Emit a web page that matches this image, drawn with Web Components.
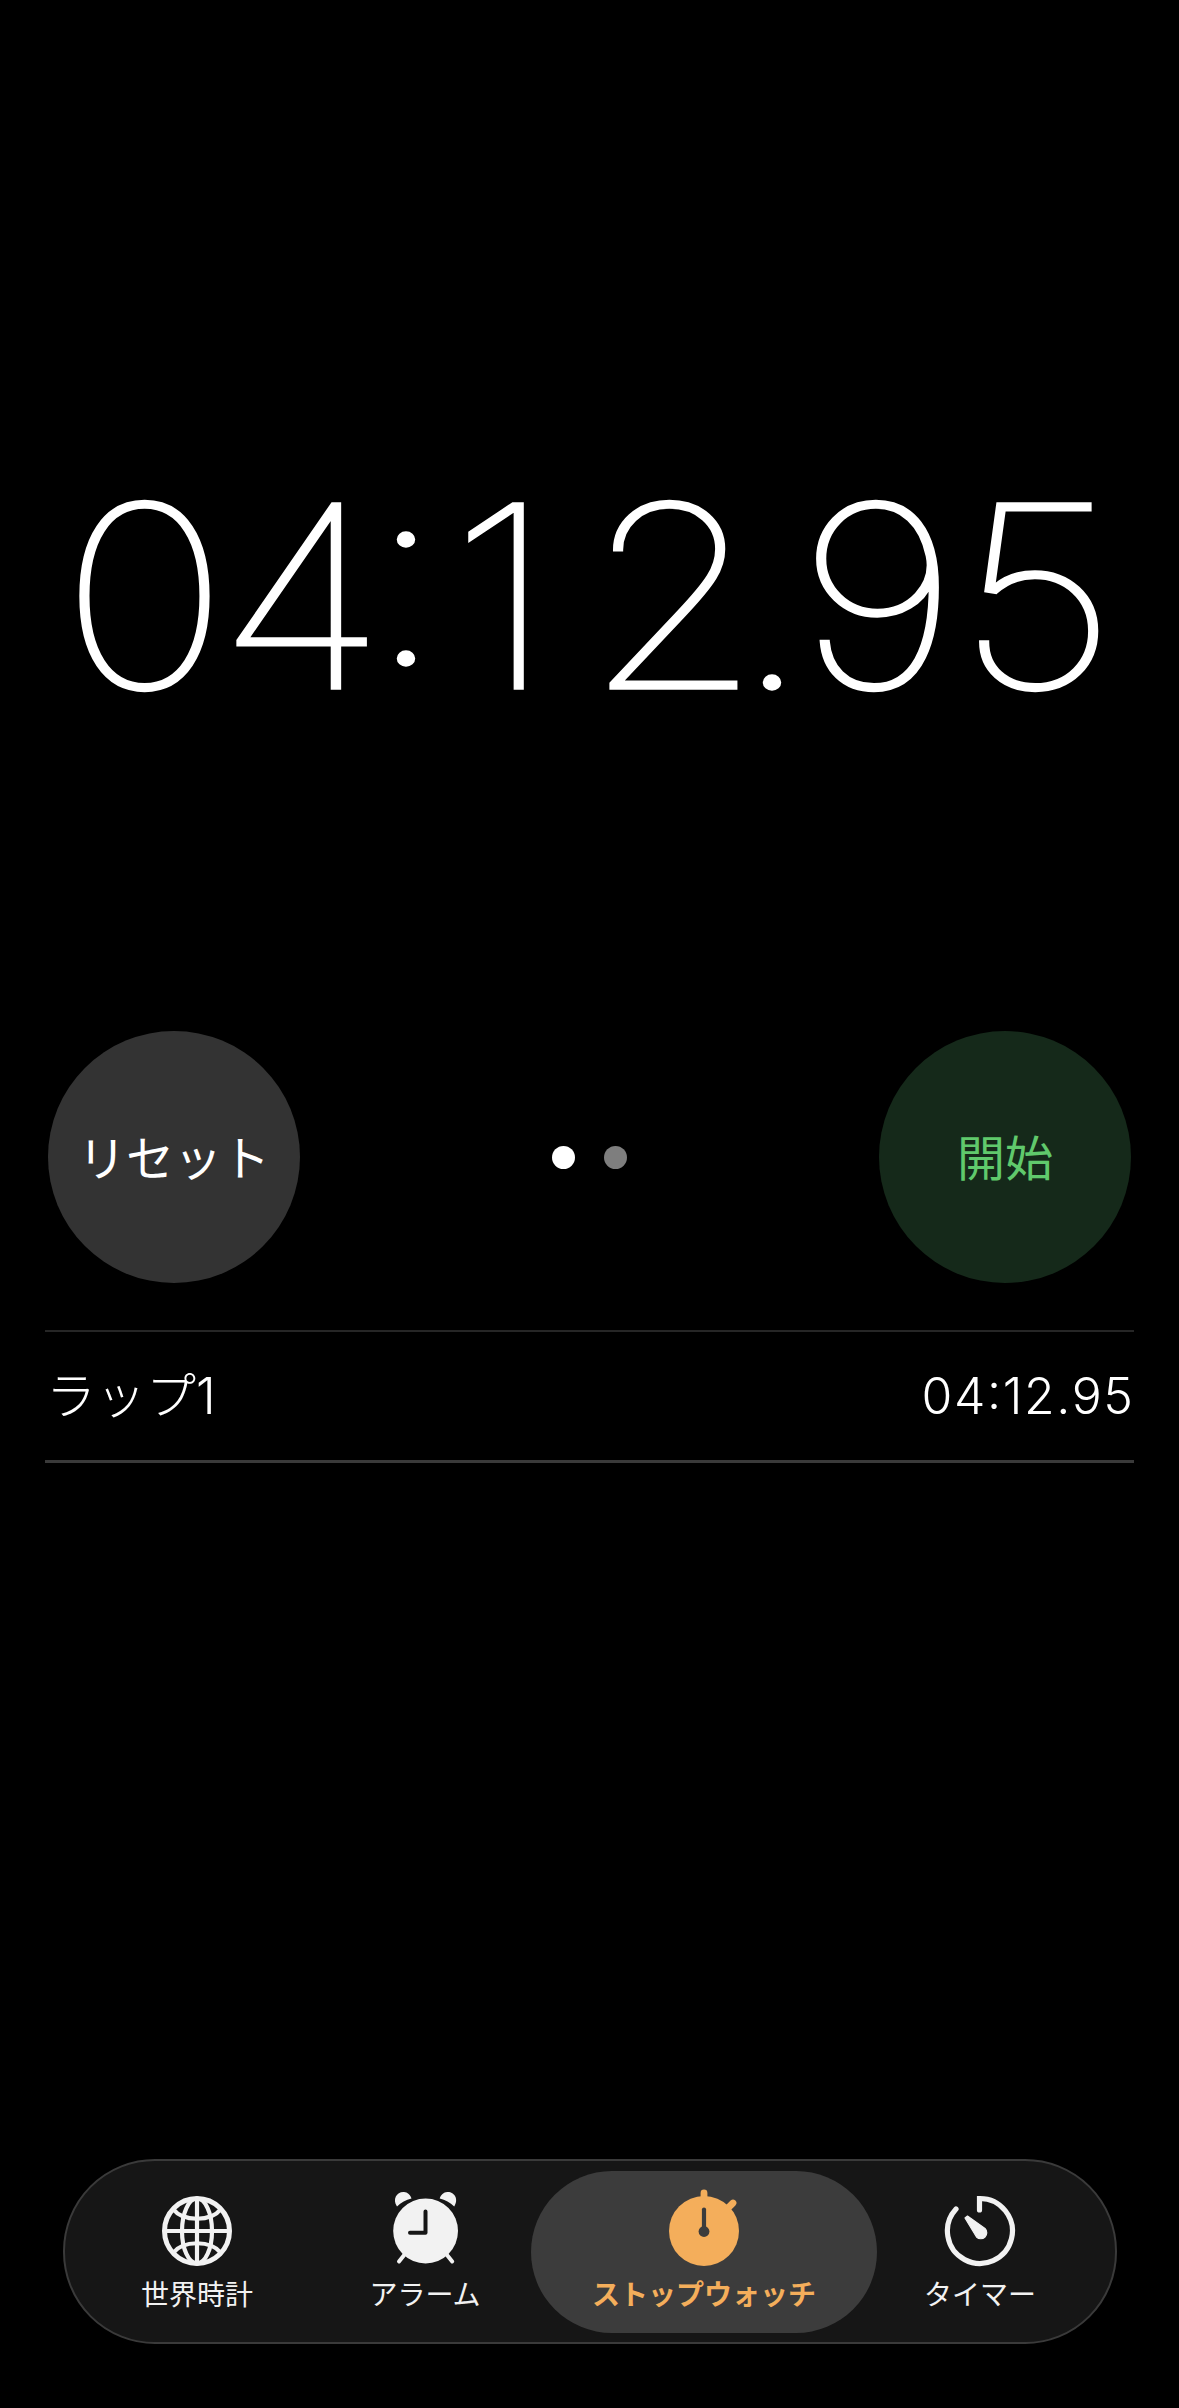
<!DOCTYPE html>
<html lang="ja">
<head>
<meta charset="utf-8">
<title>ストップウォッチ</title>
<style>
  html, body { margin: 0; background: #000; }
  body { font-family: Inter, "Noto Sans CJK JP", sans-serif; color: #fff; }
</style>
</head>
<body>
<stopwatch-app>
  <time-display value="04:12.95"></time-display>
  <control-row>
    <round-button slot="left" variant="reset">リセット</round-button>
    <page-dots slot="center"></page-dots>
    <round-button slot="right" variant="start">開始</round-button>
  </control-row>
  <lap-list>
    <lap-row><span slot="name">ラップ1</span><span slot="time">04:12.95</span></lap-row>
  </lap-list>
  <tab-bar>
    <tab-item label="世界時計">
      <svg viewBox="0 0 90 90" fill="none" stroke="#f2f2f2" stroke-width="4.2">
        <circle cx="45" cy="45" r="32.500" stroke-width="5"/>
        <ellipse cx="45" cy="45" rx="15" ry="32.500"/>
        <path d="M45 12V78M12.500 45H77.500"/>
        <path d="M21 23C31 36 59 36 69 23M21 67C31 54 59 54 69 67"/>
      </svg>
    </tab-item>
    <tab-item label="アラーム">
      <svg viewBox="0 0 90 90">
        <circle cx="45.600" cy="45" r="32.400" fill="#f2f2f2"/>
        <path d="M17 20.500C12 13 17 5.500 24 6C27.500 6.200 30.500 9 31.500 12.500C26 14 21 16.500 17 20.500Z" fill="#f2f2f2"/>
        <path d="M74.200 20.500C79.200 13 74.200 5.500 67.200 6C63.700 6.200 60.700 9 59.700 12.500C65.200 14 70.200 16.500 74.200 20.500Z" fill="#f2f2f2"/>
        <path d="M25 68L19 75.500M66.200 68L72.200 75.500" stroke="#f2f2f2" stroke-width="4" stroke-linecap="round"/>
        <path d="M45.500 25.500V46.700H30" fill="none" stroke="#161616" stroke-width="4" stroke-linecap="round" stroke-linejoin="round"/>
      </svg>
    </tab-item>
    <tab-item label="ストップウォッチ" active>
      <svg viewBox="0 0 90 90">
        <circle cx="45" cy="45" r="35" fill="#f4ae5b"/>
        <path d="M45 7V15M68 23L74 17" stroke="#f4ae5b" stroke-width="6.800" stroke-linecap="round"/>
        <path d="M45 23.500V43" stroke="#3c3c3c" stroke-width="4.200" stroke-linecap="round"/>
        <circle cx="45" cy="45.500" r="5.400" fill="#3c3c3c"/>
      </svg>
    </tab-item>
    <tab-item label="タイマー">
      <svg viewBox="0 0 90 90" fill="none">
        <path d="M44.500 24V12.500A32.500 32.500 0 1 1 21 23" stroke="#f2f2f2" stroke-width="5.200" stroke-linecap="round"/>
        <path d="M30 32L32.500 30L50 42.500A6 6 0 1 1 41.500 51Z" fill="#f2f2f2" stroke="#f2f2f2" stroke-width="1.200" stroke-linejoin="round"/>
      </svg>
    </tab-item>
  </tab-bar>
</stopwatch-app>

<script>
// Root layout: one column, tab bar sits at the bottom
class StopwatchApp extends HTMLElement {
    constructor() {
        super();
        this.attachShadow({ mode: 'open' });
    }

    connectedCallback() {
        this.shadowRoot.innerHTML = `
            <style>
                :host {
                    display: flex;
                    flex-direction: column;
                    height: 2408px;
                    background: #000;
                    overflow: hidden;
                }
            </style>
            <slot></slot>
        `;
    }
}

// dy lifts the colon only
class TimeDisplay extends HTMLElement {
    constructor() {
        super();
        this.attachShadow({ mode: 'open' });
    }

    connectedCallback() {
        const stretch = 1.12;
        const centers = [144.5, 301.5, 406, 502, 673, 772, 877.5, 1037];
        const xs = centers.map(c => (c / stretch).toFixed(1)).join(' ');
        this.shadowRoot.innerHTML = `
            <style>
                :host {
                    display: block;
                    height: 1031px;
                }
                svg {
                    display: block;
                    width: 1179px;
                    height: 1031px;
                }
                text {
                    font-family: Inter, sans-serif;
                    font-size: 253px;
                    font-weight: 100;
                    fill: #fff;
                    stroke: #fff;
                    stroke-width: 3.4px;
                    text-anchor: middle;
                }
            </style>
            <svg viewBox="0 0 1179 1031">
                <text transform="scale(${stretch} 1)" x="${xs}" y="688" dy="0 0 -24 24">${this.getAttribute('value')}</text>
            </svg>
        `;
    }
}

class ControlRow extends HTMLElement {
    constructor() {
        super();
        this.attachShadow({ mode: 'open' });
    }

    connectedCallback() {
        this.shadowRoot.innerHTML = `
            <style>
                :host {
                    display: flex;
                    align-items: center;
                    justify-content: space-between;
                    padding: 0 48px;
                }
            </style>
            <slot name="left"></slot>
            <slot name="center"></slot>
            <slot name="right"></slot>
        `;
    }
}

class RoundButton extends HTMLElement {
    constructor() {
        super();
        this.attachShadow({ mode: 'open' });
    }

    connectedCallback() {
        this.shadowRoot.innerHTML = `
            <style>
                :host {
                    display: flex;
                    align-items: center;
                    justify-content: center;
                    box-sizing: border-box;
                    width: 252px;
                    height: 252px;
                    padding-bottom: 5px;
                    border-radius: 50%;
                    font-size: 48px;
                    font-weight: 400;
                    background: #333;
                    color: #fff;
                }
                :host([variant="start"]) {
                    background: #15291a;
                    color: #60c96c;
                }
            </style>
            <slot></slot>
        `;
    }
}

class PageDots extends HTMLElement {
    constructor() {
        super();
        this.attachShadow({ mode: 'open' });
    }

    connectedCallback() {
        this.shadowRoot.innerHTML = `
            <style>
                :host {
                    display: flex;
                    gap: 29px;
                }
                .dot {
                    width: 23px;
                    height: 23px;
                    border-radius: 50%;
                    background: #7e7e7e;
                }
                .dot.on {
                    background: #fff;
                }
            </style>
            <div class="dot on"></div>
            <div class="dot"></div>
        `;
    }
}

class LapList extends HTMLElement {
    constructor() {
        super();
        this.attachShadow({ mode: 'open' });
    }

    connectedCallback() {
        this.shadowRoot.innerHTML = `
            <style>
                :host {
                    display: block;
                    margin: 47px 45px 0;
                    border-top: 2px solid #262626;
                    flex: 1;
                }
            </style>
            <slot></slot>
        `;
    }
}

class LapRow extends HTMLElement {
    constructor() {
        super();
        this.attachShadow({ mode: 'open' });
    }

    connectedCallback() {
        this.shadowRoot.innerHTML = `
            <style>
                :host {
                    display: flex;
                    align-items: baseline;
                    justify-content: space-between;
                    height: 94px;
                    padding: 34px 0 0 1px;
                    border-bottom: 3px solid #3a3a3a;
                    font-size: 50px;
                    font-weight: 300;
                    line-height: 60px;
                }
                .time {
                    letter-spacing: 1.6px;
                    margin-right: -0.6px;
                    font-feature-settings: "case";
                }
            </style>
            <span><slot name="name"></slot></span>
            <span class="time"><slot name="time"></slot></span>
        `;
    }
}

class TabBar extends HTMLElement {
    constructor() {
        super();
        this.attachShadow({ mode: 'open' });
    }

    connectedCallback() {
        this.shadowRoot.innerHTML = `
            <style>
                :host {
                    display: grid;
                    grid-template-columns: 244px 212px 346px 206px;
                    box-sizing: border-box;
                    width: 1054px;
                    height: 185px;
                    margin: 0 0 64px 63px;
                    padding: 10px 0 9px 10px;
                    border: 2px solid #3a3a3a;
                    border-radius: 92px;
                    background: #161616;
                }
            </style>
            <slot></slot>
        `;
    }
}

class TabItem extends HTMLElement {
    constructor() {
        super();
        this.attachShadow({ mode: 'open' });
    }

    connectedCallback() {
        const label = this.getAttribute('label');
        this.shadowRoot.innerHTML = `
            <style>
                :host {
                    display: flex;
                    flex-direction: column;
                    align-items: center;
                    padding-top: 15px;
                    border-radius: 81px;
                    color: #f2f2f2;
                    font-size: 28px;
                    font-weight: 400;
                    line-height: 34px;
                }
                :host([active]) {
                    background: #3c3c3c;
                    color: #f4ae5b;
                    font-weight: 700;
                }
                ::slotted(svg) {
                    width: 90px;
                    height: 90px;
                    display: block;
                }
                .label {
                    margin-top: 2px;
                    white-space: nowrap;
                }
            </style>
            <slot></slot>
            <div class="label">${label}</div>
        `;
    }
}

customElements.define('stopwatch-app', StopwatchApp);
customElements.define('time-display', TimeDisplay);
customElements.define('control-row', ControlRow);
customElements.define('round-button', RoundButton);
customElements.define('page-dots', PageDots);
customElements.define('lap-list', LapList);
customElements.define('lap-row', LapRow);
customElements.define('tab-bar', TabBar);
customElements.define('tab-item', TabItem);
</script>
</body>
</html>
